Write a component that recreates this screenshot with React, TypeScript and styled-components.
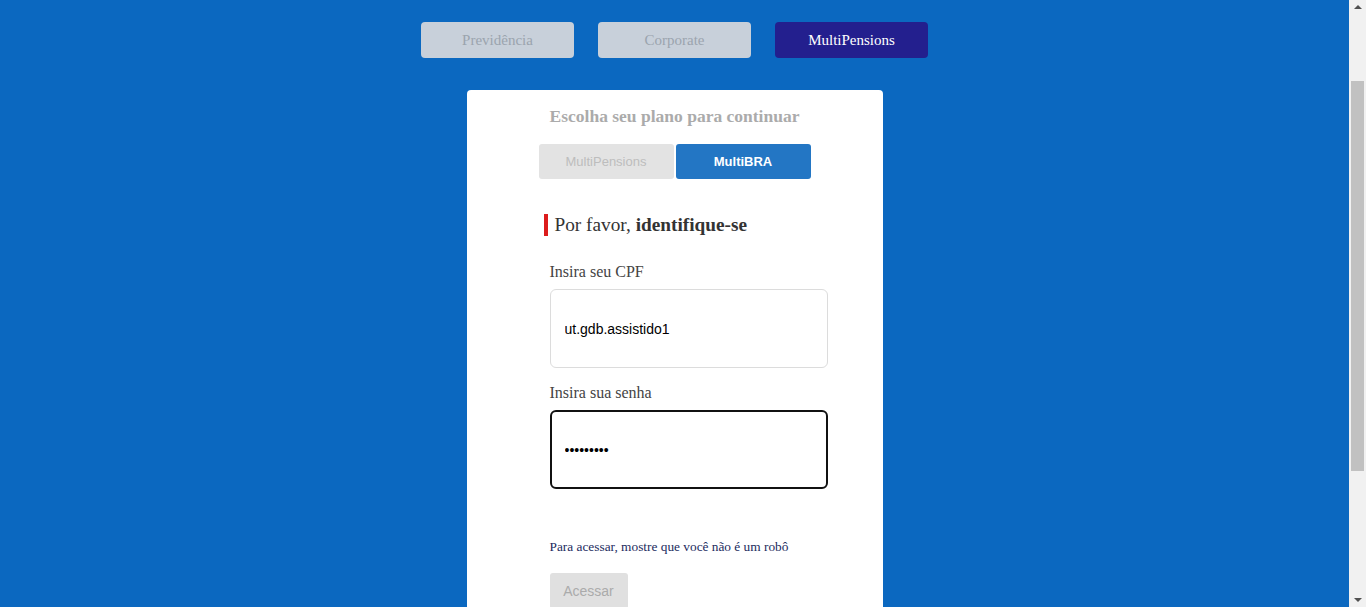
import React from 'react'
import styled, { createGlobalStyle } from 'styled-components'

const GlobalStyle = createGlobalStyle`
  html, body {
    margin: 0;
    padding: 0;
    background: #0b68c0;
  }
  * {
    box-sizing: border-box;
  }
`

const Page = styled.div`
  display: flex;
  flex-direction: column;
  align-items: center;
  padding: 22px 17px 100px 0;
  min-height: 100vh;
`

// the browser's own scrollbar, drawn over the right edge
const ScrollTrack = styled.div`
  position: fixed;
  top: 0;
  right: 0;
  width: 17px;
  height: 100vh;
  background: #f1f1f1;
  display: flex;
  flex-direction: column;
  align-items: center;
  justify-content: space-between;
  padding: 5px 0;
`

const ScrollThumb = styled.div`
  position: absolute;
  top: 81px;
  left: 2px;
  width: 13px;
  height: 390px;
  background: #c1c1c1;
`

const Arrow = styled.svg`
  width: 8px;
  height: 4px;
  fill: #505050;
`

const PlanBar = styled.nav`
  display: flex;
  gap: 24px;
`

const PlanButton = styled.button<{ $active?: boolean }>`
  width: 153px;
  height: 36px;
  border: none;
  border-radius: 4px;
  font-family: 'Liberation Serif', serif;
  font-size: 15px;
  background: ${p => (p.$active ? '#231f8e' : '#c8d0da')};
  color: ${p => (p.$active ? '#ffffff' : '#9ba4ae')};
  cursor: pointer;
`

const Card = styled.main`
  width: 416px;
  margin-top: 32px;
  background: #fff;
  border-radius: 4px;
  padding: 16px 0 190px;
  display: flex;
  flex-direction: column;
`

const CardTitle = styled.h2`
  margin: 0;
  text-align: center;
  font-family: 'Liberation Serif', serif;
  font-size: 17.5px;
  line-height: 20px;
  font-weight: bold;
  color: #ababab;
`

const Tabs = styled.div`
  display: flex;
  justify-content: center;
  gap: 2px;
  margin-top: 18px;
`

const Tab = styled.button<{ $active?: boolean }>`
  width: 135px;
  height: 35px;
  border: none;
  border-radius: 3px;
  font-family: 'Liberation Sans', Arial, sans-serif;
  font-size: 13px;
  font-weight: ${p => (p.$active ? 'bold' : 'normal')};
  background: ${p => (p.$active ? '#2376c4' : '#e3e3e3')};
  color: ${p => (p.$active ? '#ffffff' : '#bdbdbd')};
`

const Form = styled.form`
  display: flex;
  flex-direction: column;
  margin: 35px 0 0 77px;
`

const Heading = styled.h3`
  margin: 0;
  height: 22px;
  border-left: 4px solid #dc1c1c;
  padding-left: 7px;
  font-family: 'Liberation Serif', serif;
  font-size: 19.3px;
  line-height: 22px;
  font-weight: normal;
  color: #333;

  strong {
    font-weight: bold;
  }
`

const Field = styled.div`
  display: flex;
  flex-direction: column;
  gap: 8px;
  margin-left: 6px;
  width: 278px;
`

const Label = styled.label<{ $first?: boolean }>`
  font-family: 'Liberation Serif', serif;
  font-size: 16px;
  line-height: 18px;
  color: #444;
  margin-top: ${p => (p.$first ? '27px' : '16px')};
`

const Input = styled.input<{ $focused?: boolean }>`
  width: 278px;
  height: 79px;
  border-radius: 6px;
  border: ${p => (p.$focused ? '2px solid #111' : '1px solid #dcdcdc')};
  padding: 0 ${p => (p.$focused ? '13px' : '14px')};
  font-family: 'Liberation Sans', Arial, sans-serif;
  font-size: 14px;
  color: #000;
  background: #fff;
  outline: none;
`

const Notice = styled.p`
  margin: 51px 0 0 6px;
  font-family: 'Liberation Serif', serif;
  font-size: 13.33px;
  line-height: 14px;
  color: #1b2b5e;
`

const SubmitButton = styled.button`
  margin: 19px 0 0 6px;
  width: 78px;
  height: 36px;
  border: none;
  border-radius: 3px;
  background: #e0e0e0;
  color: #ababab;
  font-family: 'Liberation Sans', Arial, sans-serif;
  font-size: 14px;
  align-self: flex-start;
`

const App: React.FC = () => (
  <>
    <GlobalStyle />
    <Page>
      <PlanBar>
        <PlanButton>Previdência</PlanButton>
        <PlanButton>Corporate</PlanButton>
        <PlanButton $active>MultiPensions</PlanButton>
      </PlanBar>

      <Card>
        <CardTitle>Escolha seu plano para continuar</CardTitle>
        <Tabs>
          <Tab>MultiPensions</Tab>
          <Tab $active>MultiBRA</Tab>
        </Tabs>

        <Form onSubmit={e => e.preventDefault()}>
          <Heading>
            Por favor, <strong>identifique-se</strong>
          </Heading>
          <Field>
            <Label $first htmlFor='cpf'>Insira seu CPF</Label>
            <Input id='cpf' type='text' defaultValue='ut.gdb.assistido1' readOnly />
          </Field>
          <Field>
            <Label htmlFor='senha'>Insira sua senha</Label>
            <Input id='senha' type='password' defaultValue='123456789' readOnly $focused />
          </Field>
          <Notice>Para acessar, mostre que você não é um robô</Notice>
          <SubmitButton type='submit' disabled>Acessar</SubmitButton>
        </Form>
      </Card>
    </Page>

    <ScrollTrack>
      <Arrow viewBox='0 0 8 4'>
        <polygon points='0,4 4,0 8,4' />
      </Arrow>
      <ScrollThumb />
      <Arrow viewBox='0 0 8 4'>
        <polygon points='0,0 8,0 4,4' />
      </Arrow>
    </ScrollTrack>
  </>
)

export default App
